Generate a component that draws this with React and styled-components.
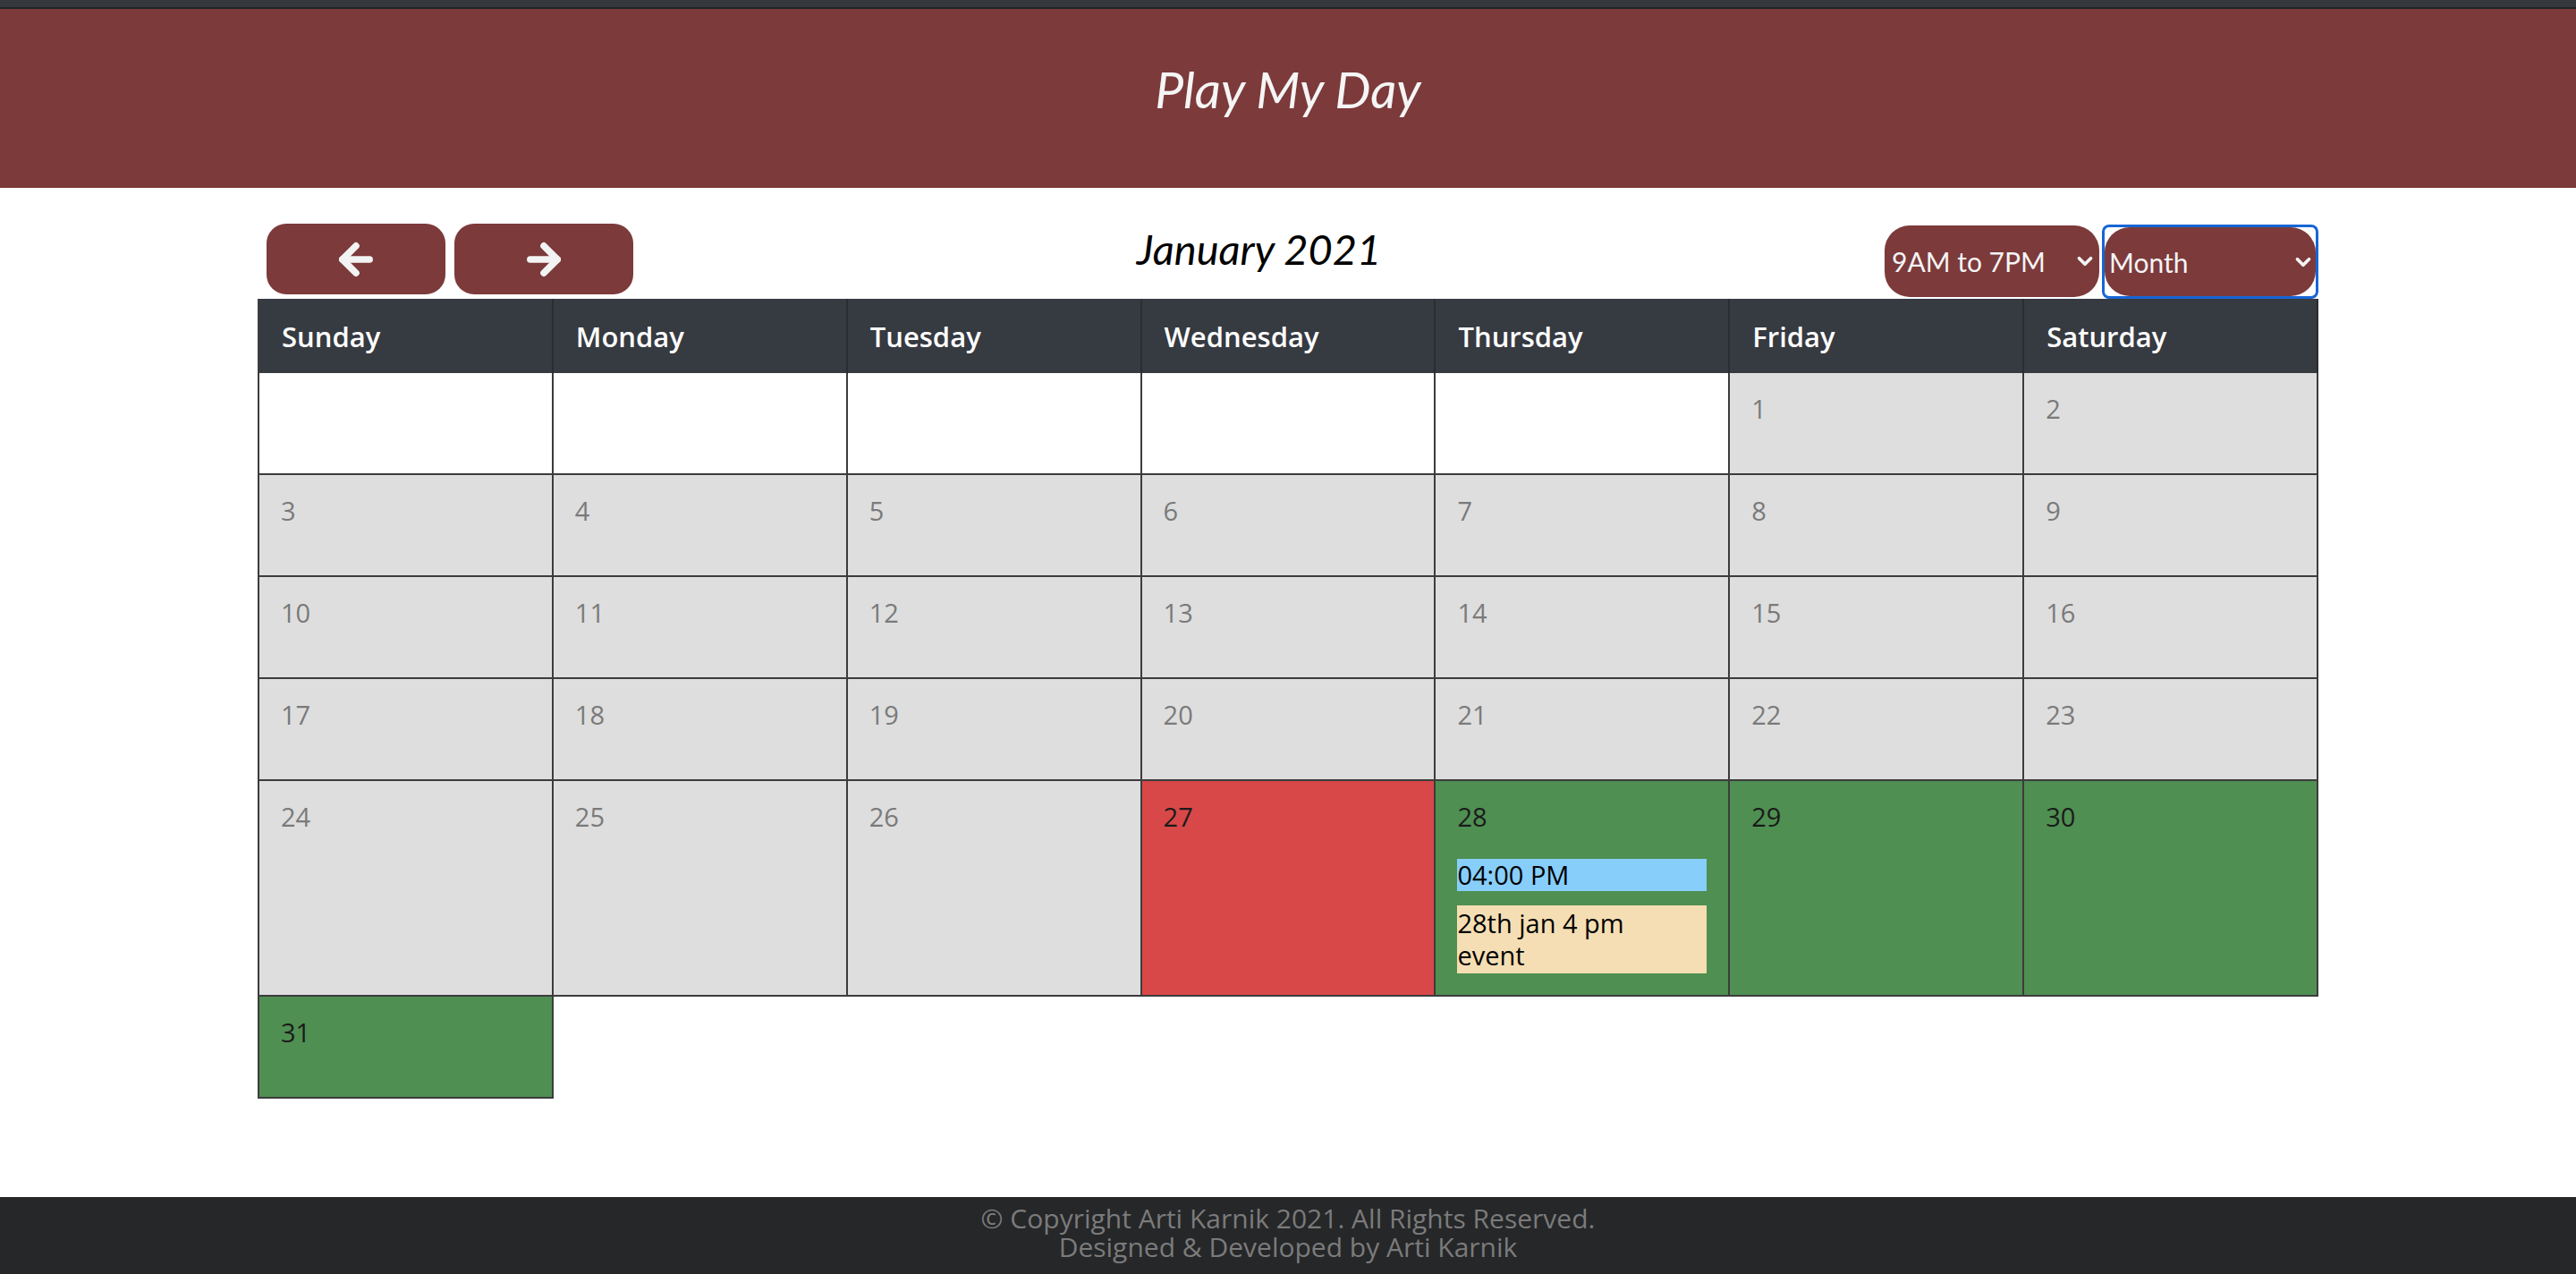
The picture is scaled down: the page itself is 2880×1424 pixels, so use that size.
import React from "react";
import styled, { createGlobalStyle } from "styled-components";
import { ArrowLeft, ArrowRight, ChevronDown } from "lucide-react";

const GlobalStyle = createGlobalStyle`
  * {
    box-sizing: border-box;
  }

  body {
    margin: 0;
    background: #ffffff;
    font-family: "Open Sans", sans-serif;
  }
`;

const TopBar = styled.div`
  height: 10px;
  background: #35383d;
  border-bottom: 2px solid #222326;
`;

const Header = styled.header`
  height: 200px;
  padding-top: 61px;

  background: #7c3a3b;
  text-align: center;
`;

const Title = styled.h1`
  margin: 0;

  font-family: "Lato", sans-serif;
  font-size: 57px;
  font-style: italic;
  font-weight: 400;
  line-height: 57px;
  color: #f5f5f5;
`;

const Main = styled.main`
  width: 80%;
  margin: 40px auto 110px;
`;

const Toolbar = styled.div`
  display: flex;
  justify-content: space-between;
  align-items: flex-start;
`;

const NavGroup = styled.div`
  display: flex;
  gap: 10px;
  padding-left: 10px;
`;

const NavButton = styled.button`
  width: 200px;
  height: 79px;

  display: flex;
  align-items: center;
  justify-content: center;

  border: none;
  border-radius: 22px;
  background: #7c3a3b;
  color: #f3f3f3;
  cursor: pointer;
`;

const MonthTitle = styled.h3`
  margin: 1px 0 0;

  font-family: "Lato", sans-serif;
  font-size: 47px;
  font-style: italic;
  font-weight: 400;
  line-height: 54px;
  color: #000;
`;

const Filters = styled.div`
  display: flex;
  align-items: flex-start;
  gap: 3px;
`;

const SelectWrap = styled.div`
  position: relative;
  margin-top: ${(p) => (p.$focused ? "1px" : "2px")};

  border: ${(p) => (p.$focused ? "3px solid #1766d4" : "none")};
  border-radius: 8px;
`;

const Select = styled.select`
  width: ${(p) => p.$width}px;
  height: ${(p) => p.$height}px;
  padding: 0 30px 0 ${(p) => p.$pad}px;

  display: block;
  appearance: none;
  outline: none;

  border: none;
  border-radius: 28px;
  background: #7c3a3b;

  font-family: "Lato", sans-serif;
  font-size: 30px;
  color: #f4f4f4;
`;

const Chevron = styled(ChevronDown)`
  position: absolute;
  top: 50%;
  right: ${(p) => p.$right}px;
  transform: translateY(-50%);

  color: #f4f4f4;
  pointer-events: none;
`;

const Grid = styled.div`
  display: grid;
  grid-template-columns: repeat(7, 1fr);

  border-left: 2px solid #3c3c3c;
`;

const DayName = styled.div`
  height: 83px;
  padding: 0 25px;

  display: flex;
  align-items: center;

  background: #363a41;
  border-right: 2px solid #2c2d30;

  font-size: 31px;
  font-weight: 600;
  color: #ffffff;
`;

const cellColors = {
  empty: { bg: "#ffffff", fg: "#7a7a7a" },
  past: { bg: "#dedede", fg: "#7a7a7a" },
  today: { bg: "#d84849", fg: "#1b1b1b" },
  future: { bg: "#4f8f52", fg: "#1b1b1b" },
};

const Cell = styled.div`
  min-height: 114px;
  padding: 18px 24px 24px;

  background: ${(p) => cellColors[p.$kind].bg};
  border-right: 2px solid #3c3c3c;
  border-bottom: 2px solid #3c3c3c;
`;

const DateNum = styled.div`
  font-size: 29px;
  line-height: 44px;
  color: ${(p) => cellColors[p.$kind].fg};
`;

const Events = styled.div`
  margin-top: 25px;

  display: flex;
  flex-direction: column;
  gap: 16px;
`;

const Event = styled.div`
  padding: ${(p) => (p.$tall ? "2px 30px 2px 0" : "0 30px 0 0")};

  background: ${(p) => p.$color};

  font-size: 29px;
  line-height: 36px;
  color: #000;
`;

const Footer = styled.footer`
  padding: 8px 0 14px;

  background: #262729;
  text-align: center;

  font-size: 30px;
  line-height: 32px;
  color: #7b7b7b;
`;

const days = [
  "Sunday",
  "Monday",
  "Tuesday",
  "Wednesday",
  "Thursday",
  "Friday",
  "Saturday",
];

const events = {
  28: [
    { text: "04:00 PM", color: "#87cefa" },
    { text: "28th jan 4 pm event", color: "#f5deb3", tall: true },
  ],
};

const TODAY = 27;
const FIRST_WEEKDAY = 5;

function buildCells() {
  const cells = [];
  for (let i = 0; i < FIRST_WEEKDAY; i++) cells.push({ kind: "empty" });
  for (let d = 1; d <= 31; d++) {
    const kind = d < TODAY ? "past" : d === TODAY ? "today" : "future";
    cells.push({ kind, day: d });
  }
  return cells;
}

export default function App() {
  const cells = buildCells();

  return (
    <>
      <GlobalStyle />
      <TopBar />
      <Header>
        <Title>Play My Day</Title>
      </Header>
      <Main>
        <Toolbar>
          <NavGroup>
            <NavButton>
              <ArrowLeft size={52} strokeWidth={3.5} />
            </NavButton>
            <NavButton>
              <ArrowRight size={52} strokeWidth={3.5} />
            </NavButton>
          </NavGroup>
          <MonthTitle>January 2021</MonthTitle>
          <Filters>
            <SelectWrap>
              <Select $width={240} $height={80} $pad={8} defaultValue="9-7">
                <option value="9-7">9AM to 7PM</option>
                <option value="all">All day</option>
              </Select>
              <Chevron size={26} strokeWidth={3.5} $right={3} />
            </SelectWrap>
            <SelectWrap $focused>
              <Select $width={236} $height={77} $pad={5} defaultValue="month">
                <option value="month">Month</option>
                <option value="week">Week</option>
                <option value="day">Day</option>
              </Select>
              <Chevron size={26} strokeWidth={3.5} $right={1} />
            </SelectWrap>
          </Filters>
        </Toolbar>
        <Grid>
          {days.map((d) => (
            <DayName key={d}>{d}</DayName>
          ))}
          {cells.map((c, i) => (
            <Cell key={i} $kind={c.kind}>
              {c.day && <DateNum $kind={c.kind}>{c.day}</DateNum>}
              {events[c.day] && (
                <Events>
                  {events[c.day].map((e) => (
                    <Event key={e.text} $color={e.color} $tall={e.tall}>
                      {e.text}
                    </Event>
                  ))}
                </Events>
              )}
            </Cell>
          ))}
        </Grid>
      </Main>
      <Footer>
        © Copyright Arti Karnik 2021. All Rights Reserved.
        <br />
        Designed &amp; Developed by Arti Karnik
      </Footer>
    </>
  );
}
